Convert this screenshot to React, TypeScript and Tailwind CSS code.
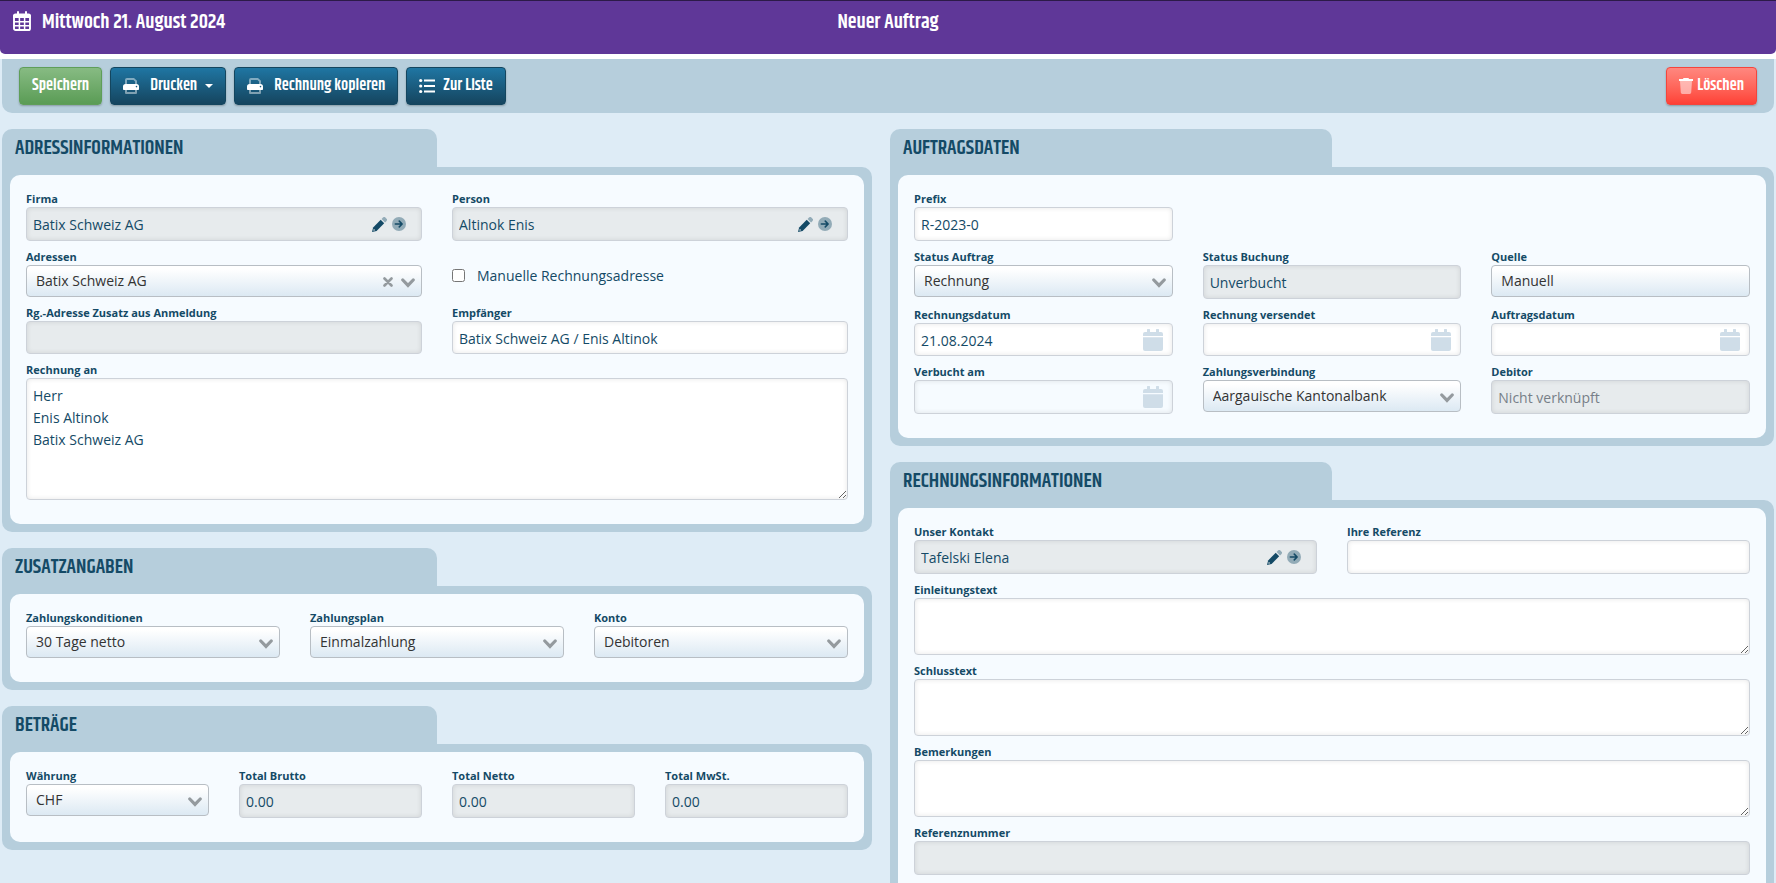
import React, { useId } from "react";

const inset = "shadow-[inset_0_0_5px_rgba(0,0,0,0.10)]";
const inputBase =
  "block w-full rounded-[4px] border border-[#cdd2d9] px-[6px] pt-px text-[14px] text-[#144a66] placeholder:text-[#777f88] " +
  inset;
const titleFont =
  "font-['Khand','Liberation_Sans_Narrow','Roboto_Condensed','Liberation_Sans',sans-serif]";

function CalendarGrid() {
  return (
    <svg viewBox="0 0 18 20" className="h-[20px] w-[18px]" fill="none" stroke="currentColor" aria-hidden="true">
      <path d="M5 1v3M13 1v3" strokeWidth="2" strokeLinecap="round" />
      <path d="M2.5 2.5h13A2.5 2.5 0 0 1 18 5V7H0V5A2.500 2.500 0 0 1 2.500 2.500z" fill="currentColor" stroke="none" />
      <rect x="1" y="4" width="16" height="15" rx="1.600" strokeWidth="1.900" />
      <path d="M1 10.700h16M1 14.700h16M6.400 6v13M11.600 6v13" strokeWidth="1.500" />
    </svg>
  );
}

function PrintIcon() {
  return (
    <svg viewBox="0 0 16 16" className="h-4 w-4" aria-hidden="true">
      <path
        d="M2 6V2a2 2 0 0 1 2-2h7l3 2.800V6h-2V3.500L10.500 2H4v4zM2 12h2v2h8v-2h2v3a1 1 0 0 1-1 1H3a1 1 0 0 1-1-1z"
        fill="currentColor"
        opacity=".45"
      />
      <path
        d="M2.500 6h11A2.500 2.500 0 0 1 16 8.500V11.200a.8.8 0 0 1-.8.8H.8a.8.8 0 0 1-.8-.8V8.500A2.500 2.500 0 0 1 2.500 6zM13.500 7.800a.8.8 0 1 0 0 1.600.8.8 0 0 0 0-1.600z"
        fill="currentColor"
        fillRule="evenodd"
      />
    </svg>
  );
}

function ListIcon() {
  return (
    <svg viewBox="0 0 16 16" className="h-4 w-4" aria-hidden="true" fill="currentColor">
      <circle cx="1.700" cy="2.500" r="1.600" />
      <circle cx="1.700" cy="8" r="1.600" />
      <circle cx="1.700" cy="13.500" r="1.600" />
      <path d="M5 1.500h11v2H5zM5 7h11v2H5zM5 12.500h11v2H5z" />
    </svg>
  );
}

function TrashIcon() {
  return (
    <svg viewBox="0 0 14 16" className="h-4 w-[14px]" aria-hidden="true" fill="currentColor">
      <path d="M1 3h12l-.8 11.600A1.500 1.500 0 0 1 10.700 16H3.300a1.500 1.500 0 0 1-1.500-1.400z" opacity=".5" />
      <path d="M0 1h4l.5-1h5l.5 1h4v2H0z" />
    </svg>
  );
}

function PencilIcon() {
  return (
    <svg viewBox="0 0 16 16" className="h-[15px] w-[15px]" aria-hidden="true" fill="currentColor">
      <path d="M1.200 11.100 9.300 3l3.700 3.700-8.100 8.100L0 16z" />
      <path d="m10.200 2.100 1.600-1.600a1.700 1.700 0 0 1 2.400 0l1.300 1.300a1.700 1.700 0 0 1 0 2.400l-1.600 1.600z" opacity=".4" />
      <path d="m1.900 12.600 1.500 1.500-2 .5z" fill="#e7ebed" />
    </svg>
  );
}

function ArrowCircleIcon() {
  return (
    <svg viewBox="0 0 16 16" className="h-[14px] w-[14px]" aria-hidden="true">
      <circle cx="8" cy="8" r="8" fill="currentColor" opacity=".4" />
      <path d="M3.800 8h7.700M8.300 4.700 11.600 8l-3.300 3.300" fill="none" stroke="currentColor" strokeWidth="1.800" strokeLinecap="round" strokeLinejoin="round" />
    </svg>
  );
}

function ChevronIcon() {
  return (
    <svg viewBox="0 0 14 10" className="h-[10px] w-[14px]" aria-hidden="true">
      <path d="M1.800 2 7 7.400 12.200 2" fill="none" stroke="#949a9e" strokeWidth="3.200" strokeLinecap="round" />
    </svg>
  );
}

function CrossIcon() {
  return (
    <svg viewBox="0 0 10 10" className="h-[10px] w-[10px]" aria-hidden="true">
      <path d="m1.500 1.500 7 7M8.500 1.500l-7 7" fill="none" stroke="#949a9e" strokeWidth="2.600" strokeLinecap="round" />
    </svg>
  );
}

function DateIcon() {
  return (
    <svg viewBox="0 0 20 22" className="h-[22px] w-5" aria-hidden="true" fill="#cfdde8">
      <path d="M4 3V1a1 1 0 0 1 3 0v2h6V1a1 1 0 0 1 3 0v2h2a2 2 0 0 1 2 2v2H0V5a2 2 0 0 1 2-2z" />
      <path d="M0 8.300h20V20a2 2 0 0 1-2 2H2a2 2 0 0 1-2-2z" />
    </svg>
  );
}

function Label({ htmlFor, children }: { htmlFor: string; children: React.ReactNode }) {
  return (
    <label htmlFor={htmlFor} className="block h-4 text-[11px] leading-4 font-bold text-[#144a66]">
      {children}
    </label>
  );
}

type TextProps = { label: string; value?: string; placeholder?: string; disabled?: boolean; size?: "md" | "sm" };

function TextField({ label, value = "", placeholder, disabled, size = "md" }: TextProps) {
  const id = useId();
  return (
    <div>
      <Label htmlFor={id}>{label}</Label>
      <input
        id={id}
        type="text"
        defaultValue={value}
        placeholder={placeholder}
        readOnly={disabled}
        className={`${inputBase} ${size === "sm" ? "h-[33px]" : "h-[34px]"} ${disabled ? "bg-[#e7ebed]" : "bg-white"}`}
      />
    </div>
  );
}

function LinkedField({ label, value }: { label: string; value: string }) {
  const id = useId();
  return (
    <div>
      <Label htmlFor={id}>{label}</Label>
      <div className="relative">
        <input id={id} type="text" readOnly defaultValue={value} className={`${inputBase} h-[34px] bg-[#e7ebed]`} />
        <div className="absolute inset-y-0 right-4 flex items-center gap-[5px] text-[#144a66]">
          <button type="button" aria-label={`${label} bearbeiten`}>
            <PencilIcon />
          </button>
          <button type="button" aria-label={`${label} öffnen`}>
            <ArrowCircleIcon />
          </button>
        </div>
      </div>
    </div>
  );
}

function DateField({ label, value = "", muted }: { label: string; value?: string; muted?: boolean }) {
  const id = useId();
  return (
    <div>
      <Label htmlFor={id}>{label}</Label>
      <div className="relative">
        <input
          id={id}
          type="text"
          defaultValue={value}
          readOnly={muted}
          className={`${inputBase} ${muted ? "h-[34px] bg-[#f6fbff]" : "h-[33px] bg-white"}`}
        />
        <button type="button" aria-label={`${label} wählen`} className="absolute top-[6px] right-[10px]">
          <DateIcon />
        </button>
      </div>
    </div>
  );
}

type SelectProps = { label: string; value: string; clearable?: boolean; plain?: boolean };

function SelectField({ label, value, clearable, plain }: SelectProps) {
  const id = useId();
  return (
    <div>
      <Label htmlFor={id}>{label}</Label>
      <div className="relative">
        <select
          id={id}
          defaultValue={value}
          className="block h-8 w-full appearance-none rounded-[4px] border border-[#b8bec4] bg-linear-to-b from-white from-10% to-[#dce9f3] pr-8 pb-px pl-[9px] text-[14px] text-[#333]"
        >
          <option>{value}</option>
        </select>
        {clearable && (
          <button type="button" aria-label="Auswahl löschen" className="absolute top-[12px] right-[29px]">
            <CrossIcon />
          </button>
        )}
        {!plain && (
          <span className="pointer-events-none absolute top-[13px] right-[7px]">
            <ChevronIcon />
          </span>
        )}
      </div>
    </div>
  );
}

function AreaField({ label, value = "", tall }: { label: string; value?: string; tall?: boolean }) {
  const id = useId();
  return (
    <div>
      <Label htmlFor={id}>{label}</Label>
      <textarea
        id={id}
        defaultValue={value}
        className={`block w-full rounded-[4px] border border-[#cdd2d9] bg-white px-[6px] py-[6px] text-[14px] leading-[22px] text-[#144a66] ${inset} ${tall ? "h-[122px]" : "h-[57px]"}`}
      />
    </div>
  );
}

function Section({ title, children }: { title: string; children: React.ReactNode }) {
  return (
    <section>
      <h2
        className={`h-[38px] w-1/2 rounded-t-[10px] bg-[#b6cedc] px-[13px] text-[20px] leading-[40px] font-semibold text-[#144a66] uppercase ${titleFont}`}
      >
        {title}
      </h2>
      <div className="rounded-[10px] rounded-tl-none bg-[#b6cedc] p-2">
        <div className="flex flex-col gap-2 rounded-[10px] bg-[#f6fbff] px-4 pt-4 pb-6">{children}</div>
      </div>
    </section>
  );
}

const btn =
  "flex h-[38px] items-center rounded-[4px] border px-3 text-[16px] font-semibold text-white shadow-[0_1px_2px_rgba(0,0,0,0.25)] " +
  titleFont;
const blue = "border-[#14465f] bg-linear-to-b from-[#1f76a3] to-[#15455f]";

export default function App() {
  const manualId = useId();
  return (
    <div className="min-h-screen bg-[#deecf6] font-['Open_Sans',sans-serif]">
      <div className="bg-white pb-[5px]">
        <header
          className={`grid h-[54px] grid-cols-[1fr_auto_1fr] rounded-b-[5px] border-t border-[#2c1a48] bg-[#5f3798] px-[13px] pt-[10px] text-[20px] leading-6 font-semibold text-white ${titleFont}`}
        >
          <div className="flex items-start gap-[11px]">
            <CalendarGrid />
            <span>Mittwoch 21. August 2024</span>
          </div>
          <h1>Neuer Auftrag</h1>
        </header>
      </div>

      <div className="px-[2px]">
        <div className="flex h-[54px] items-center gap-2 rounded-b-[10px] bg-[#b6cedc] px-[17px]">
          <button type="button" className={`${btn} border-[#5f9e59] bg-linear-to-b from-[#87bb83] to-[#5a9c55]`}>
            Speichern
          </button>
          <button type="button" className={`${btn} ${blue}`}>
            <PrintIcon />
            <span className="ml-[11px]">Drucken</span>
            <span className="ml-2 border-x-4 border-t-4 border-x-transparent border-t-white" />
          </button>
          <button type="button" className={`${btn} ${blue}`}>
            <PrintIcon />
            <span className="ml-[11px]">Rechnung kopieren</span>
          </button>
          <button type="button" className={`${btn} ${blue}`}>
            <ListIcon />
            <span className="ml-2">Zur Liste</span>
          </button>
          <button
            type="button"
            className={`${btn} ml-auto border-[#f4453c] bg-linear-to-b from-[#ff877f] to-[#ff3f35]`}
          >
            <TrashIcon />
            <span className="ml-1">Löschen</span>
          </button>
        </div>

        <main className="grid grid-cols-[870fr_884fr] items-start gap-[18px] pt-4 pb-4">
          <div className="flex flex-col gap-4">
            <Section title="Adressinformationen">
              <div className="grid grid-cols-2 gap-x-[30px] gap-y-2">
                <LinkedField label="Firma" value="Batix Schweiz AG" />
                <LinkedField label="Person" value="Altinok Enis" />
                <SelectField label="Adressen" value="Batix Schweiz AG" clearable />
                <div className="flex items-center gap-3 pt-1">
                  <input id={manualId} type="checkbox" className="size-[13px]" />
                  <label htmlFor={manualId} className="text-[14px] text-[#144a66]">
                    Manuelle Rechnungsadresse
                  </label>
                </div>
                <TextField label="Rg.-Adresse Zusatz aus Anmeldung" disabled size="sm" />
                <TextField label="Empfänger" value="Batix Schweiz AG / Enis Altinok" size="sm" />
              </div>
              <AreaField label="Rechnung an" value={"Herr\nEnis Altinok\nBatix Schweiz AG"} tall />
            </Section>

            <Section title="Zusatzangaben">
              <div className="grid grid-cols-3 gap-x-[30px]">
                <SelectField label="Zahlungskonditionen" value="30 Tage netto" />
                <SelectField label="Zahlungsplan" value="Einmalzahlung" />
                <SelectField label="Konto" value="Debitoren" />
              </div>
            </Section>

            <Section title="Beträge">
              <div className="grid grid-cols-4 gap-x-[30px]">
                <SelectField label="Währung" value="CHF" />
                <TextField label="Total Brutto" value="0.00" disabled />
                <TextField label="Total Netto" value="0.00" disabled />
                <TextField label="Total MwSt." value="0.00" disabled />
              </div>
            </Section>
          </div>

          <div className="flex flex-col gap-4">
            <Section title="Auftragsdaten">
              <div className="grid grid-cols-3 gap-x-[30px] gap-y-2">
                <div className="col-span-3 grid grid-cols-subgrid">
                  <TextField label="Prefix" value="R-2023-0" />
                </div>
                <SelectField label="Status Auftrag" value="Rechnung" />
                <TextField label="Status Buchung" value="Unverbucht" disabled />
                <SelectField label="Quelle" value="Manuell" plain />
                <DateField label="Rechnungsdatum" value="21.08.2024" />
                <DateField label="Rechnung versendet" />
                <DateField label="Auftragsdatum" />
                <DateField label="Verbucht am" muted />
                <SelectField label="Zahlungsverbindung" value="Aargauische Kantonalbank" />
                <TextField label="Debitor" placeholder="Nicht verknüpft" disabled />
              </div>
            </Section>

            <Section title="Rechnungsinformationen">
              <div className="grid grid-cols-2 gap-x-[30px]">
                <LinkedField label="Unser Kontakt" value="Tafelski Elena" />
                <TextField label="Ihre Referenz" />
              </div>
              <AreaField label="Einleitungstext" />
              <AreaField label="Schlusstext" />
              <AreaField label="Bemerkungen" />
              <TextField label="Referenznummer" disabled />
            </Section>
          </div>
        </main>
      </div>
    </div>
  );
}
